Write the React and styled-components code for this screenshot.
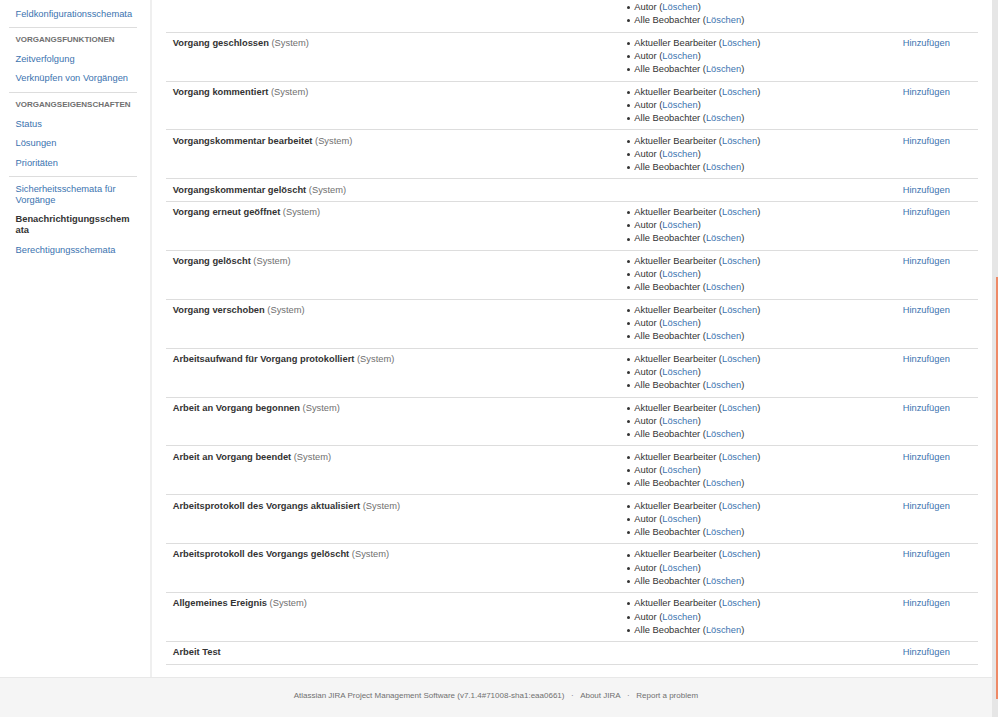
import React from "react";
import styled, { createGlobalStyle } from "styled-components";

const GlobalStyle = createGlobalStyle`
  html, body { margin: 0; padding: 0; background: #ffffff; }
  body {
    font-family: "Liberation Sans", Arial, Helvetica, sans-serif;
    font-size: 9.33px;
    color: #333333;
  }
  * { box-sizing: border-box; }
`;

const Viewport = styled.div`
  display: flex;
  height: 100vh;
  overflow: hidden;
`;

const Page = styled.div`
  flex: 1;
  display: flex;
  flex-direction: column;
  min-width: 0;
`;

const Body = styled.div`
  display: flex;
  align-items: stretch;
`;

const Sidebar = styled.nav`
  flex: 0 0 152px;
  width: 152px;
  border-right: 2px solid #efefef;
  padding: 4.25px 13.33px 0 9.33px;
  background: #ffffff;
`;

const NavLink = styled.a`
  display: block;
  padding: 4.55px 3px 4.55px 6.17px;
  line-height: 10.5px;
  font-size: 9.33px;
  color: ${(p) => (p.$active ? "#333333" : "#3b73af")};
  font-weight: ${(p) => (p.$active ? "bold" : "normal")};
  text-decoration: none;
  overflow-wrap: break-word;
  cursor: pointer;
`;

const NavDivider = styled.hr`
  border: 0;
  height: 1px;
  background: #dddddd;
  margin: 3.5px 0 2.5px;
`;

const NavHeading = styled.div`
  padding: 4.5px 3px 0 6.17px;
  margin-bottom: 4px;
  line-height: 10px;
  font-size: 8px;
  font-weight: bold;
  text-transform: uppercase;
  color: #707070;
`;

const Main = styled.main`
  flex: 1;
  min-width: 0;
  padding: 0 13.7px 12.6px 14px;
  background: #ffffff;
`;

/* negative top margin reproduces the scrolled position of the table */
const Table = styled.div`
  margin-top: -16.3px;
  display: flex;
  flex-direction: column;
`;

const Row = styled.div`
  display: grid;
  grid-template-columns: 447px 283px 1fr;
  border-bottom: 1px solid #dddddd;
`;

const Cell = styled.div`
  padding: 4.22px 6.67px;
  line-height: 13.15px;
  font-size: 9.33px;
`;

const EventName = styled.strong`
  font-weight: bold;
  color: #333333;
`;

const SystemTag = styled.span`
  color: #707070;
`;

const RecipientList = styled.ul`
  list-style: none;
  margin: 0 0 0 7px;
  padding: 0;
`;

const Recipient = styled.li`
  display: flex;
  align-items: center;
  color: #333333;
  &::before {
    content: "";
    flex: 0 0 3px;
    width: 3px;
    height: 3px;
    border-radius: 50%;
    background: #333333;
    margin-right: 4.7px;
  }
`;

const Link = styled.a`
  color: #3b73af;
  text-decoration: none;
  cursor: pointer;
`;

const Footer = styled.footer`
  flex: 1;
  background: #f5f5f5;
  border-top: 1px solid #e8e8e8;
  padding: 12.67px 0;
`;

const FooterList = styled.ul`
  list-style: none;
  margin: 0;
  padding: 0;
  display: flex;
  justify-content: center;
  font-size: 8px;
  line-height: 10.67px;
  color: #707070;
`;

const FooterItem = styled.li`
  & + &::before {
    content: "·";
    padding: 0 6.5px;
  }
`;

const FooterLink = styled.a`
  color: #707070;
  text-decoration: none;
`;

const ScrollTrack = styled.div`
  flex: 0 0 6.3px;
  width: 6.3px;
  background: #e6e6e6;
  display: flex;
  flex-direction: column;
  align-items: flex-end;
`;

const ScrollThumb = styled.div`
  margin-top: 277px;
  width: 2px;
  height: 422px;
  background: #ee8966;
`;

const STD = ["Aktueller Bearbeiter", "Autor", "Alle Beobachter"];

const EVENTS = [
  { name: "Vorgang erledigt", system: true, recipients: STD },
  { name: "Vorgang geschlossen", system: true, recipients: STD },
  { name: "Vorgang kommentiert", system: true, recipients: STD },
  { name: "Vorgangskommentar bearbeitet", system: true, recipients: STD },
  { name: "Vorgangskommentar gelöscht", system: true, recipients: [] },
  { name: "Vorgang erneut geöffnet", system: true, recipients: STD },
  { name: "Vorgang gelöscht", system: true, recipients: STD },
  { name: "Vorgang verschoben", system: true, recipients: STD },
  { name: "Arbeitsaufwand für Vorgang protokolliert", system: true, recipients: STD },
  { name: "Arbeit an Vorgang begonnen", system: true, recipients: STD },
  { name: "Arbeit an Vorgang beendet", system: true, recipients: STD },
  { name: "Arbeitsprotokoll des Vorgangs aktualisiert", system: true, recipients: STD },
  { name: "Arbeitsprotokoll des Vorgangs gelöscht", system: true, recipients: STD },
  { name: "Allgemeines Ereignis", system: true, recipients: STD },
  { name: "Arbeit Test", system: false, recipients: [] },
];

export default function App() {
  return (
    <>
      <GlobalStyle />
      <Viewport>
        <Page>
          <Body>
            <Sidebar>
              <NavLink>Feldkonfigurationsschemata</NavLink>
              <NavDivider />
              <NavHeading>Vorgangsfunktionen</NavHeading>
              <NavLink>Zeitverfolgung</NavLink>
              <NavLink>Verknüpfen von Vorgängen</NavLink>
              <NavDivider />
              <NavHeading>Vorgangseigenschaften</NavHeading>
              <NavLink>Status</NavLink>
              <NavLink>Lösungen</NavLink>
              <NavLink>Prioritäten</NavLink>
              <NavDivider />
              <NavLink>Sicherheitsschemata für Vorgänge</NavLink>
              <NavLink $active>Benachrichtigungsschemata</NavLink>
              <NavLink>Berechtigungsschemata</NavLink>
            </Sidebar>
            <Main>
              <Table>
                {EVENTS.map((ev) => (
                  <Row key={ev.name}>
                    <Cell>
                      <EventName>{ev.name}</EventName>
                      {ev.system && <SystemTag> (System)</SystemTag>}
                    </Cell>
                    <Cell>
                      {ev.recipients.length > 0 && (
                        <RecipientList>
                          {ev.recipients.map((r) => (
                            <Recipient key={r}>
                              <span>
                                {r} (<Link>Löschen</Link>)
                              </span>
                            </Recipient>
                          ))}
                        </RecipientList>
                      )}
                    </Cell>
                    <Cell>
                      <Link>Hinzufügen</Link>
                    </Cell>
                  </Row>
                ))}
              </Table>
            </Main>
          </Body>
          <Footer>
            <FooterList>
              <FooterItem>
                Atlassian JIRA Project Management Software (v7.1.4#71008-sha1:eaa0661)
              </FooterItem>
              <FooterItem>
                <FooterLink>About JIRA</FooterLink>
              </FooterItem>
              <FooterItem>
                <FooterLink>Report a problem</FooterLink>
              </FooterItem>
            </FooterList>
          </Footer>
        </Page>
        <ScrollTrack>
          <ScrollThumb />
        </ScrollTrack>
      </Viewport>
    </>
  );
}
